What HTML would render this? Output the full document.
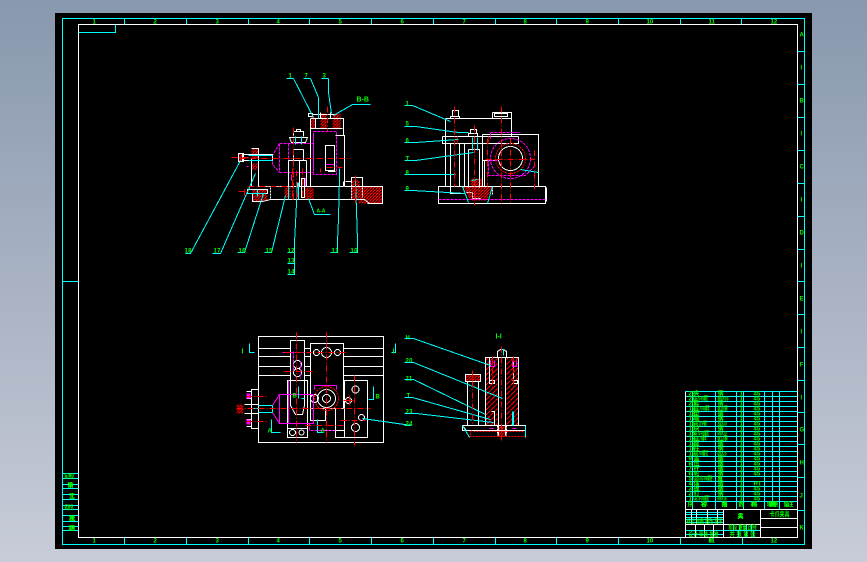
<!DOCTYPE html>
<html><head><meta charset="utf-8"><style>
html,body{margin:0;padding:0;width:867px;height:562px;overflow:hidden;background:linear-gradient(#8898ae,#c8ccd8)}
#s{position:absolute;left:0;top:0}
path,line,circle,rect,polygon{shape-rendering:crispEdges;fill:none;stroke-width:1}
.c{stroke:#0ff}.w{stroke:#fff}.r{stroke:#f00}.m{stroke:#f0f}
.rd{stroke:#f00;stroke-dasharray:6 2 1 2}
.rs{stroke:#f00;stroke-dasharray:2 1}
.md{stroke:#f0f;stroke-dasharray:3 1}
.wd{stroke:#fff;stroke-dasharray:2 1}
text{fill:#0f0;font-family:"Liberation Sans","Noto Sans CJK SC",sans-serif;font-size:6px;font-weight:bold}
.t{font-size:5px}
.l{font-size:7px}
.h{fill:url(#hp);stroke:none}
.hw{fill:url(#hp2);stroke:none}
</style></head><body>
<svg id="s" width="867" height="562" viewBox="0 0 867 562" xmlns="http://www.w3.org/2000/svg">
<defs>
<pattern id="hp" width="3" height="3" patternUnits="userSpaceOnUse"><rect width="3" height="3" style="fill:#000;stroke:none"/><path d="M0 3L3 0" style="stroke:#f00"/><rect x="0" y="0" width="1" height="1" style="fill:#f00;stroke:none"/></pattern>
<pattern id="hp2" width="5" height="5" patternUnits="userSpaceOnUse"><path d="M0 5L5 0" style="stroke:#f00"/></pattern>
</defs>
<rect x="55" y="13" width="757" height="536" style="fill:#000;stroke:none"/>
<g transform="translate(.5,.5)">
<!-- frames -->
<rect class="c" x="62" y="18" width="742" height="526"/>
<rect class="w" x="78" y="24" width="719" height="513"/>
<path class="c" d="M78 32H115V24"/>
<path class="c" d="M124 18V24M186 18V24M248 18V24M309 18V24M371 18V24M433 18V24M495 18V24M556 18V24M618 18V24M680 18V24M741 18V24
M124 537V544M186 537V544M248 537V544M309 537V544M371 537V544M433 537V544M495 537V544M556 537V544M618 537V544M680 537V544M742 537V544
M797 51H804M797 84H804M797 117H804M797 150H804M797 183H804M797 216H804M797 249H804M797 281H804M797 314H804M797 347H804M797 380H804M797 412H804M797 444H804M797 477H804M797 510H804
M62 281H78"/>
<path class="c" d="M62 473H78M62 478H78M62 484H78M62 488H78M62 494H78M62 499H78M62 505H78M62 509H78M62 515H78M62 521H78M62 526H78M62 530H78"/>
<g class="t">
<text x="92" y="23">1</text><text x="153" y="23">2</text><text x="215" y="23">3</text><text x="276" y="23">4</text><text x="338" y="23">5</text><text x="400" y="23">6</text><text x="462" y="23">7</text><text x="523" y="23">8</text><text x="585" y="23">9</text><text x="646" y="23">10</text><text x="708" y="23">11</text><text x="770" y="23">12</text>
<text x="92" y="542">1</text><text x="153" y="542">2</text><text x="215" y="542">3</text><text x="276" y="542">4</text><text x="338" y="542">5</text><text x="400" y="542">6</text><text x="462" y="542">7</text><text x="523" y="542">8</text><text x="585" y="542">9</text><text x="646" y="542">10</text><text x="708" y="542">11</text><text x="770" y="542">12</text>
<text x="799" y="36">A</text><text x="800" y="69">l</text><text x="799" y="102">B</text><text x="800" y="135">l</text><text x="799" y="168">C</text><text x="800" y="201">l</text><text x="799" y="234">D</text><text x="800" y="267">l</text><text x="799" y="300">E</text><text x="800" y="333">l</text><text x="799" y="366">F</text><text x="800" y="399">l</text><text x="799" y="431">G</text><text x="799" y="464">H</text><text x="799" y="497">J</text><text x="799" y="529">K</text>
<text x="64" y="478" textLength="10" lengthAdjust="spacingAndGlyphs">标准化</text><text x="67" y="487" textLength="6">审核</text><text x="68" y="498" textLength="5">工艺</text><text x="64" y="509" textLength="9" lengthAdjust="spacingAndGlyphs">标准化</text><text x="68" y="520" textLength="5">批准</text><text x="68" y="530" textLength="5">日期</text>
</g>

<!-- title block -->
<path class="c" d="M685 391H797M685 396H797M685 401H797M685 406H797M685 411H797M685 416H797M685 421H797M685 426H797M685 431H797M685 436H797M685 441H797M685 446H797M685 451H797M685 456H797M685 461H797M685 466H797M685 471H797M685 476H797M685 481H797M685 486H797M685 491H797M685 496H797M685 501H797
M692 391V509M715 391V501M736 391V509M743 391V501M764 391V509M772 391V501M779 391V509M715 501V509M743 501V509"/>
<path class="c" d="M685 512H723M685 514H723M685 517H723M685 519H723M685 522H723M690 524H723M685 530H723M685 534H723M723 524H760M723 530H760
M733 524V530M739 524V530M746 524V530M751 524V530M738 530V537M746 530V537M753 530V537"/>
<path class="w" d="M685 391V537M685 509H797M723 509V537M760 509V537M760 518H797M760 527H797M723 524H760M685 524H723M691 509V524M696 509V524M707 509V524M717 509V524M695 524V537M704 524V537M713 524V537"/>
<path class="c" d="M742 537V544"/>
<g class="t">
<text x="688" y="395">22</text><text x="693" y="395" textLength="4">夹</text><text x="717" y="395" textLength="4">钢</text><text x="739" y="395">1</text><text x="753" y="395">45</text>
<text x="688" y="400">21</text><text x="693" y="400" textLength="15" lengthAdjust="spacingAndGlyphs">GB70-85螺钉</text><text x="717" y="400" textLength="11" lengthAdjust="spacingAndGlyphs">M6×16</text><text x="739" y="400">1</text><text x="753" y="400">45</text>
<text x="688" y="405">20</text><text x="693" y="405" textLength="3">套</text><text x="717" y="405" textLength="6">钢</text><text x="739" y="405">1</text><text x="753" y="405">45</text>
<text x="688" y="410">19</text><text x="693" y="410" textLength="16" lengthAdjust="spacingAndGlyphs">GB6170-86螺母</text><text x="717" y="410" textLength="10" lengthAdjust="spacingAndGlyphs">M10钢</text><text x="739" y="410">1</text><text x="753" y="410">45</text>
<text x="688" y="415">18</text><text x="693" y="415" textLength="4">垫</text><text x="717" y="415" textLength="4">钢</text><text x="739" y="415">1</text><text x="753" y="415">45</text>
<text x="688" y="420">17</text><text x="693" y="420" textLength="4">轴</text><text x="717" y="420" textLength="4">钢</text><text x="739" y="420">1</text><text x="753" y="420">45</text>
<text x="688" y="425">16</text><text x="693" y="425" textLength="13" lengthAdjust="spacingAndGlyphs">GB119销</text><text x="717" y="425" textLength="9" lengthAdjust="spacingAndGlyphs">A6×30</text><text x="739" y="425">1</text><text x="753" y="425">45</text>
<text x="688" y="430">15</text><text x="693" y="430" textLength="3">块</text><text x="717" y="430" textLength="3">钢</text><text x="739" y="430">1</text><text x="753" y="430">45</text>
<text x="688" y="435">14</text><text x="693" y="435" textLength="16" lengthAdjust="spacingAndGlyphs">GB70-85螺钉</text><text x="717" y="435" textLength="9" lengthAdjust="spacingAndGlyphs">M8×20</text><text x="739" y="435">1</text><text x="753" y="435">45</text>
<text x="688" y="440">13</text><text x="693" y="440" textLength="13" lengthAdjust="spacingAndGlyphs">GB6170螺母</text><text x="717" y="440" textLength="10" lengthAdjust="spacingAndGlyphs">M12钢</text><text x="739" y="440">1</text><text x="753" y="440">45</text>
<text x="688" y="445">12</text><text x="693" y="445" textLength="3">座</text><text x="717" y="445" textLength="5">钢</text><text x="739" y="445">1</text><text x="753" y="445">45</text>
<text x="688" y="450">11</text><text x="693" y="450" textLength="3">柱</text><text x="717" y="450" textLength="4">钢</text><text x="739" y="450">1</text><text x="753" y="450">45</text>
<text x="688" y="455">10</text><text x="693" y="455" textLength="15" lengthAdjust="spacingAndGlyphs">GB70螺钉</text><text x="717" y="455" textLength="9" lengthAdjust="spacingAndGlyphs">M6×25</text><text x="739" y="455">1</text><text x="753" y="455">45</text>
<text x="688" y="460">9</text><text x="693" y="460" textLength="3">盖</text><text x="717" y="460" textLength="5">钢</text><text x="739" y="460">1</text><text x="753" y="460">45</text>
<text x="688" y="465">8</text><text x="693" y="465" textLength="3">压</text><text x="717" y="465" textLength="3">钢</text><text x="739" y="465">1</text><text x="753" y="465">45</text>
<text x="688" y="470">7</text><text x="693" y="470" textLength="3">杆</text><text x="717" y="470" textLength="5">钢</text><text x="739" y="470">1</text><text x="753" y="470">45</text>
<text x="688" y="475">6</text><text x="693" y="475" textLength="3">轮</text><text x="717" y="475" textLength="3">钢</text><text x="739" y="475">1</text><text x="753" y="475">45</text>
<text x="688" y="480">5</text><text x="693" y="480" textLength="19" lengthAdjust="spacingAndGlyphs">GB5783-86螺栓</text><text x="717" y="480" textLength="5">M8</text><text x="739" y="480">1</text>
<text x="688" y="485">4</text><text x="693" y="485" textLength="3">体</text><text x="717" y="485" textLength="5">钢</text><text x="739" y="485">1</text><text x="753" y="485">HT</text>
<text x="688" y="490">3</text><text x="693" y="490" textLength="3">板</text><text x="717" y="490" textLength="3">钢</text><text x="739" y="490">1</text><text x="753" y="490">45</text>
<text x="688" y="495">2</text><text x="693" y="495" textLength="3">钉</text><text x="717" y="495" textLength="3">钢</text><text x="739" y="495">1</text><text x="753" y="495">45</text>
<text x="688" y="500">1</text><text x="693" y="500" textLength="16" lengthAdjust="spacingAndGlyphs">GB70-85螺钉</text><text x="717" y="500" textLength="9" lengthAdjust="spacingAndGlyphs">M8×16</text><text x="739" y="500">1</text><text x="753" y="500">45</text>
<text x="687" y="506" textLength="4">序</text><text x="700" y="506" textLength="7">名称</text><text x="721" y="506" textLength="6">规格</text><text x="738" y="506">数</text><text x="750" y="506" textLength="7">材料</text><text x="766" y="506" textLength="12">单重 总重</text><text x="783" y="506" textLength="10">备注</text>
<text x="686" y="523" textLength="36" lengthAdjust="spacingAndGlyphs">标记 处数 更改 签字</text>
<text x="737" y="518" textLength="6">夹具</text>
<text x="769" y="516" class="l" textLength="20" lengthAdjust="spacingAndGlyphs">卡爪夹具</text>
<text x="728" y="529" textLength="28" lengthAdjust="spacingAndGlyphs">阶段 重量 比例</text>
<text x="688" y="536" textLength="30" lengthAdjust="spacingAndGlyphs">设计 审核 批准</text>
<text x="729" y="536" textLength="26" lengthAdjust="spacingAndGlyphs">共 张 第 张</text>
<text x="708" y="542">H</text>
</g>

<!-- TOP LEFT VIEW -->
<rect class="h" x="358" y="186" width="24" height="17"/>
<rect class="h" x="304" y="187" width="9" height="12"/>
<rect class="h" x="284" y="187" width="6" height="10"/>
<rect class="h" x="351" y="180" width="8" height="19"/>
<rect class="h" x="251" y="148" width="7" height="10"/>
<rect class="h" x="251" y="163" width="6" height="6"/>
<rect class="h" x="238" y="153" width="5" height="8"/>
<rect class="h" x="252" y="189" width="15" height="12"/>
<rect class="h" x="310" y="116" width="5" height="12"/>
<rect class="h" x="320" y="113" width="6" height="15"/>
<rect class="h" x="332" y="113" width="8" height="16"/>
<path class="md" d="M313 131H336V174H313ZM279 143H313M279 172H313M279 143V172M288 143V172M279 143L272 155V164L279 172M313 134V170"/>
<path class="m" d="M325 164H334V170M291 174V180M302 178H305V186M246 166H248"/>
<path class="w" d="M258 186H343M270 199H364M310 118V186M310 118H343V128M310 128H342M343 118V135M335 135H344V186M325 145H334V170H325ZM334 170H328V171H335M343 186V181M345 181H351V177H362V186M364 199L369 203H382V186H358M344 186H358"/>
<path class="w" d="M308 113H312V116H308ZM312 114H336M315 118V128M320 112V118M330 112V118"/>
<path class="w" d="M288 160H306M288 160V186M306 160V186M299 160V186M293 160V149M303 160V149M293 149H303M291 142H305L307 137H289ZM293 136V131H303V136M296 131V129H300V131M301 178H304V197H301Z"/>
<path class="w" d="M251 148H258V186M251 158V186M242 154H272V160H242ZM238 153H243V161H238Z"/>
<path class="w" d="M247 189H267V193H247ZM252 193V201H262L270 199"/>
<path class="wd" d="M358 186H382V203H366M270 187V199M362 187V197M351 181V199"/>
<path class="c" d="M248 193H265M257 189V196M248 160H272M248 155H272M288 199V186M298 182V199M295 136V144M301 136V144"/>
<path class="c" d="M293 78H286M293 78L313 117M310 78H303M310 78L318 97L318 118M328 78H321M328 78V92L331 113M370 104H352L333 115M330 214H314L308 198"/>
<path class="c" d="M185 253H190L240 160M212 253H220L255 173M237 252H244L263 193M264 252H271L285 195M287 252H294V242L295 223L297 182M287 263H294M287 274H294V242M330 252H337V241L338 218L339 175V168M349 252H357V240L355 180"/>
<path class="rd" d="M327 106V131M239 158H350M248 186H290M326 167H342M293 127V200M292 168V200M355 175V202M296 170V198M302 168V198M231 157H248M244 189V195M320 168V172M238 191H248"/>
<text x="356" y="101" class="l">B-B</text><text x="316" y="212" class="t">A-A</text>
<g class="t"><text x="288" y="77">1</text><text x="304" y="77">7</text><text x="322" y="77">3</text>
<text x="184" y="252" textLength="7">18</text><text x="213" y="252" textLength="7">17</text><text x="238" y="252" textLength="7">16</text><text x="265" y="252" textLength="7">15</text><text x="287" y="252" textLength="7">12</text><text x="287" y="262" textLength="7">13</text><text x="287" y="273" textLength="7">14</text><text x="331" y="252" textLength="7">11</text><text x="350" y="252" textLength="7">10</text></g>

<!-- TOP RIGHT VIEW -->
<polygon class="h" points="462,186 492,186 486,200 470,200"/>
<rect class="h" x="470" y="178" width="12" height="8"/>
<path class="w" d="M438 186H545V203H438ZM438 186V203M546 187V201M450 186V193H464"/>
<path class="w" d="M445 118H511V136M445 118V186M442 136H518M442 136V143H518V136M450 143V186M459 143V186M464 143V186M468 149H479V187M468 149V187M482 134H538V186M482 134V186M482 160H495M484 160V186M492 112H511V118M492 112V118M494 113H507V116H494ZM450 118V116H459V118M452 116V110H458V116M468 136V133H477V136M470 133V129H476V133"/>
<path class="wd" d="M492 186V195M466 192H472V198H480"/>
<circle class="w" cx="510" cy="158" r="12"/><circle class="rs" cx="510" cy="158" r="15"/><circle class="md" cx="510" cy="158" r="20"/>
<path class="md" d="M490 132H519M490 132V138M487 175H525L535 165M438 199H545M497 160H488V173"/>
<path class="c" d="M412 105H404M412 105L450 121M415 126H404M415 126L458 132H468M415 142H404M415 142L458 139M415 160H404M415 160L473 152M404 174H455M412 190H404M412 190L465 193M520 169L538 172"/>
<path class="c" d="M472 137V150M477 137V150M462 186L468 202M492 186L487 203M471 180L477 179"/>
<path class="rd" d="M454 106V186M474 125V205M501 106V203M510 138V203M487 138V186M534 150V190M485 159H534"/>
<path class="rs" d="M457 136V143M488 136V143"/>
<g class="t"><text x="405" y="105">1</text><text x="405" y="125">5</text><text x="405" y="142">6</text><text x="405" y="160">T</text><text x="405" y="174">8</text><text x="405" y="190">9</text></g>

<!-- BOTTOM LEFT VIEW -->
<path class="w" d="M258 336H383V442H258ZM258 348H290M304 348H310M343 348H383M258 356H290M304 356H310M343 356H383M258 366H290M304 366H310M343 366H383M258 375H290M304 375H310M343 375H383"/>
<path class="w" d="M310 343H343V408H310ZM344 380H367V437H344ZM290 340H304V380H290ZM287 380H307V437H287ZM290 380V405L295 414H302L304 405V380M251 389H258V428H251ZM246 391H251V398H246M246 419H251V426H246M244 404H258V413H244M326 408H344M325 408V420H310V408M335 408V437H344M325 430H344M287 428H307"/>
<circle class="w" cx="297" cy="364" r="4"/><circle class="w" cx="297" cy="372" r="4"/>
<circle class="w" cx="316" cy="352" r="3"/><circle class="w" cx="326" cy="352" r="5"/><circle class="w" cx="337" cy="352" r="3"/>
<circle class="w" cx="326" cy="398" r="9"/><circle class="w" cx="326" cy="398" r="4"/><circle class="rs" cx="326" cy="398" r="12"/>
<circle class="w" cx="355" cy="389" r="3.5"/><circle class="w" cx="348" cy="400" r="3"/><circle class="w" cx="361" cy="417" r="3"/><circle class="w" cx="355" cy="427" r="4"/>
<circle class="w" cx="292" cy="432" r="3"/><circle class="w" cx="301" cy="432" r="2.5"/><circle class="w" cx="314" cy="398" r="4"/>
<rect class="h" x="236" y="404" width="7" height="9"/>
<rect x="246" y="393" width="4" height="5" style="fill:#f0f;stroke:none"/><rect x="246" y="419" width="4" height="5" style="fill:#f0f;stroke:none"/>
<path class="m" d="M279 394H313V423H279ZM279 394L272 405M272 412L279 423M288 380V423M314 385H336V389M314 385V389"/>
<path class="md" d="M282 352H303M293 351V370M300 361V378M309 423V430H335"/>
<path class="c" d="M258 405H272M258 412H272M272 405V412M248 408H258M298 386V398M301 398H304M271 419V432H280M317 419V432H323M373 386V399H368M395 343V352H391M249 343V352H254M404 425H411L362 418"/>
<path class="rd" d="M236 408H370M296 332V443M326 332V443M354 375V445M284 352H345M284 371H312M246 396H267M246 421H268M305 425H343M340 420H365"/>
<path class="r" d="M349 395V405M343 400H353M296 356V358"/>
<g class="t"><text x="241" y="353" class="l">I</text><text x="392" y="353" class="l">I</text><text x="292" y="397">B</text><text x="375" y="398">B</text><text x="267" y="432">A</text><text x="320" y="432">A</text>
<text x="405" y="339">H</text><text x="405" y="362" textLength="7">20</text><text x="405" y="380">21</text><text x="406" y="397">T</text><text x="405" y="413" textLength="7">23</text><text x="405" y="425" textLength="7">24</text></g>

<!-- BOTTOM RIGHT VIEW -->
<rect class="hw" x="485" y="357" width="12" height="68"/>
<rect class="hw" x="506" y="357" width="12" height="68"/>
<rect class="h" x="465" y="374" width="15" height="7"/>
<rect class="h" x="497" y="426" width="9" height="10"/>
<path class="w" d="M485 357H518V425H485ZM498 357V435M505 357V435M462 425H525V430H462ZM462 425L466 430M467 381V425M478 381V425M465 374H480V381H465ZM497 357H506V351L503 349H500L497 351V357M489 357V380M513 357V380M489 380H494V383H489ZM512 380H517V383H512M491 411H494V425H491M512 411V425"/>
<path class="wd" d="M485 357V425M518 357V425M497 425V435M506 425V435"/>
<path class="rs" d="M469 436H525M471 430L469 436M525 430V436M473 431H523"/>
<path class="m" d="M490 360V366H494V360M512 360V366H516V360M489 428H493M512 428H516"/>
<path class="c" d="M413 338H404M413 338L490 365M413 362H404M413 362L502 398M413 379H404M413 379L485 414M412 397H404M412 397L490 419M416 413H404M416 413L493 422M462 425L469 437M525 425V437M512 411V425M513 411V425M501 349H503V355"/>
<path class="rd" d="M501 346V441M492 356V388M513 356V388M472 370V425"/>
<text x="495" y="338" class="l">I-I</text>
</g>
</svg>
</body></html>
